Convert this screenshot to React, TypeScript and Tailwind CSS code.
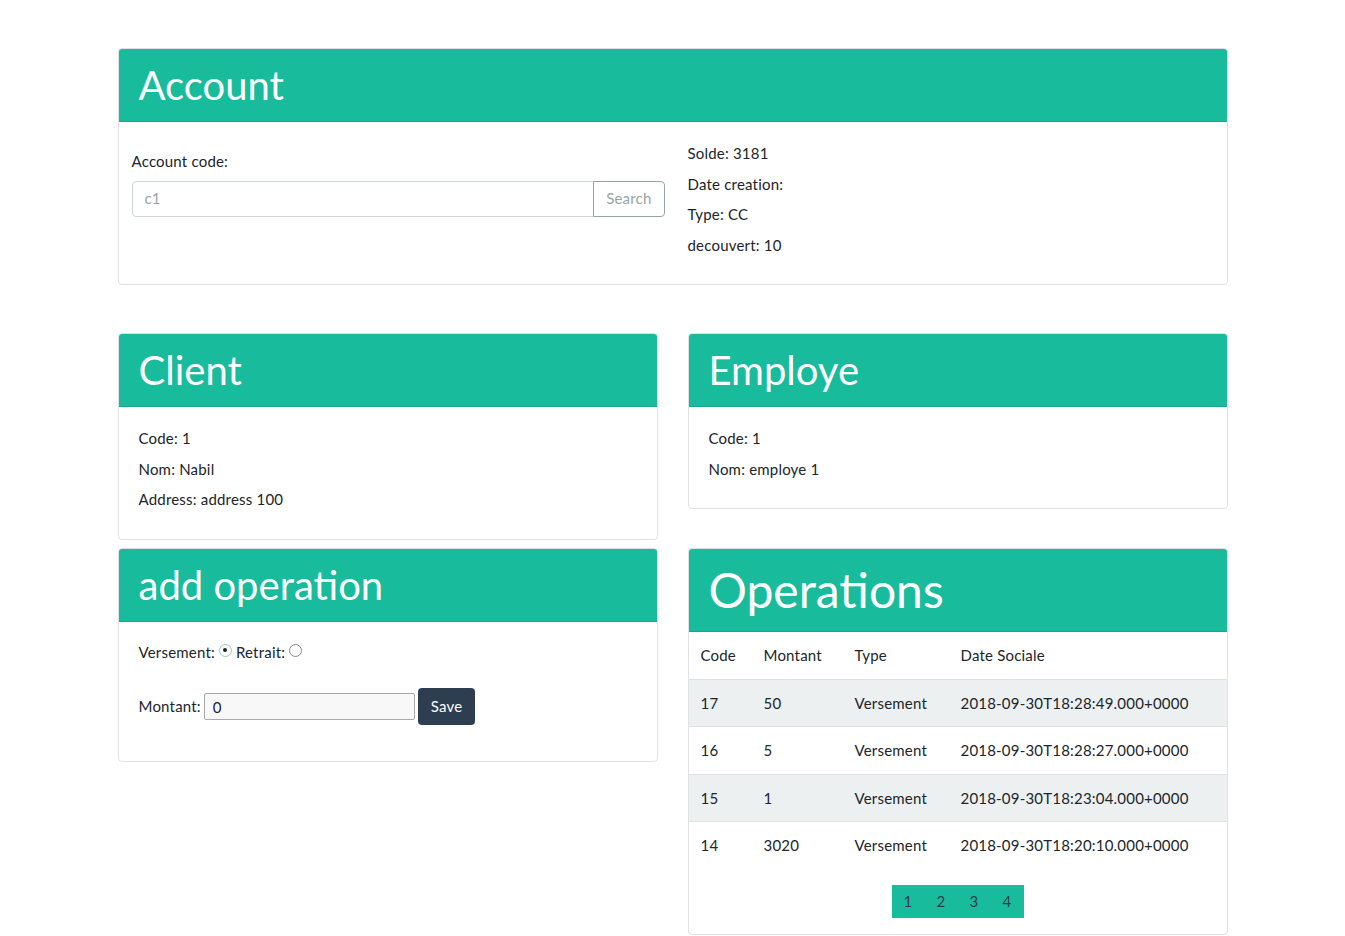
import React from 'react';

const font = { fontFamily: 'Lato, "Open Sans", sans-serif' };

function Card({ title, big, children }: { title: string; big?: boolean; children: React.ReactNode }) {
  return (
    <div className="border border-[#dfe1e3] rounded-[4px] bg-white overflow-hidden">
      <div className="bg-[#18bc9c] border-b border-[#16a88b] px-5 py-3">
        <h2
          className={
            big
              ? 'text-white text-[48px] leading-[58.5px] font-normal m-0 tracking-normal'
              : 'text-white text-[40px] leading-[48px] font-normal m-0 tracking-normal'
          }
        >
          {title}
        </h2>
      </div>
      {children}
    </div>
  );
}

function Line({ children }: { children: React.ReactNode }) {
  return <div className="leading-[22.5px] mb-[8px]">{children}</div>;
}

function Radio({ checked }: { checked?: boolean }) {
  return (
    <span
      className={
        checked
          ? 'inline-flex items-center justify-center w-[13px] h-[13px] rounded-full border border-[#8fcfc0] bg-white mx-[4px] -mt-[3px]'
          : 'inline-flex items-center justify-center w-[13px] h-[13px] rounded-full border border-[#8a8a8a] bg-white mx-[4px] -mt-[3px]'
      }
    >
      {checked && <span className="w-[4px] h-[4px] rounded-full bg-[#222]" />}
    </span>
  );
}

const ops = [
  { code: 17, montant: 50, type: 'Versement', date: '2018-09-30T18:28:49.000+0000' },
  { code: 16, montant: 5, type: 'Versement', date: '2018-09-30T18:28:27.000+0000' },
  { code: 15, montant: 1, type: 'Versement', date: '2018-09-30T18:23:04.000+0000' },
  { code: 14, montant: 3020, type: 'Versement', date: '2018-09-30T18:20:10.000+0000' },
];

export default function App() {
  return (
    <div className="min-h-screen bg-white text-[15px] text-[#212529] tracking-[0.2px]" style={font}>
      <div className="w-[1110px] mx-auto pt-[48px] pb-[1px]">
        <Card title="Account">
          <div className="flex pl-[13px] pt-5 pb-5">
            <div className="w-[533px] pt-[8px]">
              <div className="leading-[22.5px] mb-2">Account code:</div>
              <div className="flex h-[36px]">
                <input
                  readOnly
                  value="c1"
                  className="flex-1 border border-[#ced4da] rounded-l-[4px] px-3 text-[15px] text-[#95a5a6] tracking-[0.2px] outline-none"
                  style={font}
                />
                <button className="border border-[#95a5a6] rounded-r-[4px] px-3 text-[#95a5a6] text-[15px] -ml-px">
                  Search
                </button>
              </div>
            </div>
            <div className="ml-[23px]">
              <Line>Solde: 3181</Line>
              <Line>Date creation:</Line>
              <Line>Type: CC</Line>
              <Line>decouvert: 10</Line>
            </div>
          </div>
        </Card>

        <div className="grid grid-cols-2 gap-x-[30px] items-start mt-[48px]">
          <Card title="Client">
            <div className="px-5 pt-5 pb-5">
              <Line>Code: 1</Line>
              <Line>Nom: Nabil</Line>
              <Line>Address: address 100</Line>
            </div>
          </Card>
          <Card title="Employe">
            <div className="px-5 pt-5 pb-5">
              <Line>Code: 1</Line>
              <Line>Nom: employe 1</Line>
            </div>
          </Card>
        </div>

        <div className="grid grid-cols-2 gap-x-[30px] items-start mt-[8px]">
          <Card title="add operation">
            <div className="px-5 pt-[19px] pb-[36px]">
              <div className="leading-[22.5px] flex items-center">
                Versement:
                <Radio checked />
                Retrait:
                <Radio />
              </div>
              <div className="flex items-center mt-[25px]">
                <span className="leading-[22.5px]">Montant:</span>
                <input
                  readOnly
                  value="0"
                  className="ml-[3px] w-[211px] h-[27px] border border-[#a9a9a9] rounded-[2px] bg-[#f8f8f8] px-2 text-[15px] text-[#212529] outline-none"
                  style={font}
                />
                <button className="ml-[3px] h-[37px] px-[13px] bg-[#2c3e50] text-white rounded-[4px] text-[15px]">
                  Save
                </button>
              </div>
            </div>
          </Card>
          <Card title="Operations" big>
            <table className="w-full border-collapse text-left">
              <thead>
                <tr>
                  <th className="w-[63px] px-3 py-3 font-normal leading-[22.5px]">Code</th>
                  <th className="w-[91px] px-3 py-3 font-normal leading-[22.5px]">Montant</th>
                  <th className="w-[106px] px-3 py-3 font-normal leading-[22.5px]">Type</th>
                  <th className="px-3 py-3 font-normal leading-[22.5px]">Date Sociale</th>
                </tr>
              </thead>
              <tbody>
                {ops.map((o, i) => (
                  <tr
                    key={o.code}
                    className={i % 2 === 0 ? 'bg-[#ecf0f1] border-t border-[#dee2e6]' : 'border-t border-[#dee2e6]'}
                  >
                    <td className="px-3 py-3 leading-[22.5px]">{o.code}</td>
                    <td className="px-3 py-3 leading-[22.5px]">{o.montant}</td>
                    <td className="px-3 py-3 leading-[22.5px]">{o.type}</td>
                    <td className="px-3 py-3 leading-[22.5px]">{o.date}</td>
                  </tr>
                ))}
              </tbody>
            </table>
            <div className="flex justify-center mt-4 mb-4">
              <div className="flex bg-[#18bc9c]">
                {[1, 2, 3, 4].map((n) => (
                  <span key={n} className="w-[33px] h-[33px] flex items-center justify-center text-[#2c3e50]">
                    {n}
                  </span>
                ))}
              </div>
            </div>
          </Card>
        </div>
      </div>
    </div>
  );
}
